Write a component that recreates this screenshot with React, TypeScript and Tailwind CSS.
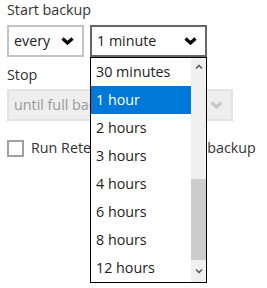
import React from 'react';

const options = ['30 minutes', '1 hour', '2 hours', '3 hours', '4 hours', '6 hours', '8 hours', '12 hours'];

function Chevron({ color = '#000' }: { color?: string }) {
    return (
        <svg width="13" height="8" viewBox="0 0 13 8" className="shrink-0">
            <polyline points="1.5,1.5 6.5,6 11.5,1.5" fill="none" stroke={color} strokeWidth="3.2" strokeLinejoin="miter" />
        </svg>
    );
}

function SmallArrow({ up }: { up?: boolean }) {
    return (
        <svg width="8" height="5" viewBox="0 0 8 5">
            <polyline
                points={up ? '1,4.5 4,1.5 7,4.5' : '1,0.5 4,3.5 7,0.5'}
                fill="none"
                stroke="#606060"
                strokeWidth="1.6"
            />
        </svg>
    );
}

export default function App() {
    const selected = '1 hour';

    return (
        <div className="w-[267px] h-[288px] bg-white pl-[7px] text-[14.3px] text-[#333] overflow-hidden" style={{ fontFamily: '"Open Sans", "Noto Sans", sans-serif' }}>
            {/* Start backup */}
            <div className="leading-[20px]">Start backup</div>
            <div className="mt-[5px] flex gap-[6px]">
                <div className="w-[77px] h-[32px] border-2 border-[#c4c4c4] flex items-center justify-between pl-[5px] pr-[8px] text-[#222]">
                    <span>every</span>
                    <Chevron />
                </div>
                <div className="relative">
                    <div className="w-[117px] h-[32px] border-2 border-[#666] flex items-center justify-between pl-[5px] pr-[8px] text-[#222]">
                        <span>1 minute</span>
                        <Chevron />
                    </div>

                    {/* Open dropdown list */}
                    <div className="absolute left-0 top-[32px] z-10 w-[117px] h-[226px] border border-black bg-white flex">
                        <div className="flex-1 flex flex-col">
                            {options.map((opt) => (
                                <div
                                    key={opt}
                                    className={
                                        opt === selected
                                            ? 'h-[28px] flex items-center pl-[5px] bg-[#0078d7] text-white'
                                            : 'h-[28px] flex items-center pl-[5px] text-[#222]'
                                    }
                                >
                                    {opt}
                                </div>
                            ))}
                        </div>
                        {/* Scrollbar */}
                        <div className="w-[15px] bg-[#f0f0f0] flex flex-col">
                            <div className="h-[17px] flex items-center justify-center">
                                <SmallArrow up />
                            </div>
                            <div className="h-[104px]"></div>
                            <div className="h-[81px] bg-[#cdcdcd]"></div>
                            <div className="flex-1 flex items-center justify-center">
                                <SmallArrow />
                            </div>
                        </div>
                    </div>
                </div>
            </div>

            {/* Stop */}
            <div className="mt-[8px] leading-[20px]">Stop</div>
            <div className="mt-[4px] w-[226px] h-[32px] border-2 border-[#e3e3e3] bg-[#eeeeee] flex items-center justify-between pl-[5px] pr-[8px] text-[#9a9a9a]">
                <span>until full backup</span>
                <Chevron color="#c8c8c8" />
            </div>

            {/* Retention checkbox */}
            <div className="mt-[17px] flex items-center gap-[7px] leading-[20px]">
                <div className="w-[17px] h-[17px] border-2 border-[#a0a0a0] bg-white"></div>
                <span>Run Retention Policy after backup</span>
            </div>
        </div>
    );
}
